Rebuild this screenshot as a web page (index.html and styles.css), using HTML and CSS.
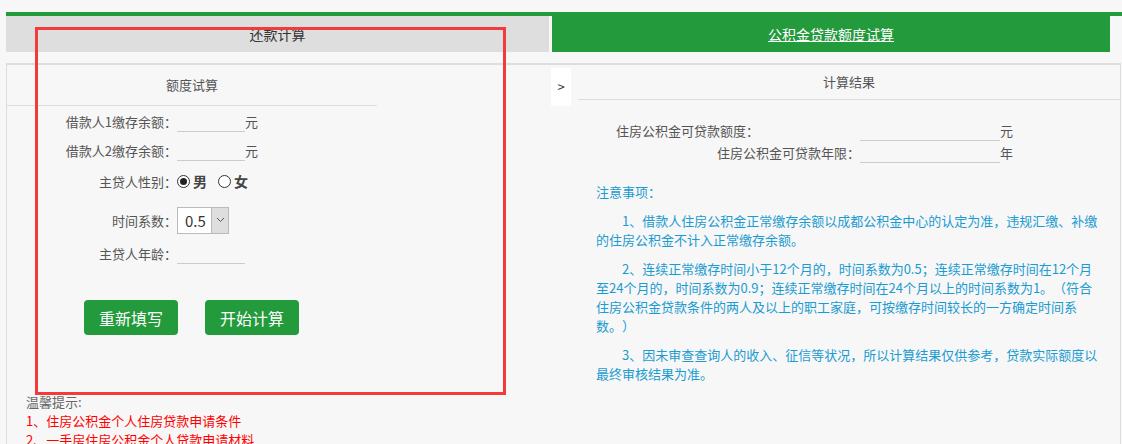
FILE: index.html
```html
<!DOCTYPE html>
<html>
<head>
    <meta charset="utf-8">
    <meta name="viewport" content="width=device-width, initial-scale=1.0">
    <link rel="stylesheet" href="styles.css">
</head>
<body>
    <div class="page">
        <div class="tabs">
            <div class="tab">还款计算</div>
            <div class="tab tab-ativa"><a href="#">公积金贷款额度试算</a></div>
        </div>

        <div class="conteudo">
            <div class="painel-esq">
                <div class="cabecalho">额度试算</div>

                <div class="linha linha-1">
                    <span class="rotulo">借款人1缴存余额：</span>
                    <input class="campo" type="text">
                    <span class="unidade">元</span>
                </div>
                <div class="linha linha-2">
                    <span class="rotulo">借款人2缴存余额：</span>
                    <input class="campo" type="text">
                    <span class="unidade">元</span>
                </div>
                <div class="linha linha-3">
                    <span class="rotulo">主贷人性别：</span>
                    <label class="opcao"><span class="radio marcado"></span><b>男</b></label>
                    <label class="opcao"><span class="radio"></span><b>女</b></label>
                </div>
                <div class="linha linha-4">
                    <span class="rotulo">时间系数：</span>
                    <span class="seletor">
                        <span class="seletor-valor">0.5</span>
                        <span class="seletor-seta">
                            <svg width="9" height="6" viewBox="0 0 9 6"><path d="M1 1 L4.5 4.5 L8 1" fill="none" stroke="#555" stroke-width="1"/></svg>
                        </span>
                    </span>
                </div>
                <div class="linha linha-5">
                    <span class="rotulo">主贷人年龄：</span>
                    <input class="campo" type="text">
                </div>

                <div class="botoes">
                    <button class="botao">重新填写</button>
                    <button class="botao">开始计算</button>
                </div>

                <div class="dicas">
                    <div class="dicas-titulo">温馨提示:</div>
                    <a href="#">1、住房公积金个人住房贷款申请条件</a>
                    <a href="#">2、一手房住房公积金个人贷款申请材料</a>
                </div>
            </div>

            <div class="alternar">&gt;</div>

            <div class="painel-dir">
                <div class="cabecalho cabecalho-dir">计算结果</div>

                <div class="resultado resultado-1">
                    <span class="rotulo-dir rotulo-esq">住房公积金可贷款额度：</span>
                    <input class="campo campo-largo" type="text">
                    <span class="unidade">元</span>
                </div>
                <div class="resultado">
                    <span class="rotulo-dir">住房公积金可贷款年限：</span>
                    <input class="campo campo-largo" type="text">
                    <span class="unidade">年</span>
                </div>

                <div class="notas">
                    <div class="notas-titulo">注意事项：</div>
                    <p>1、借款人住房公积金正常缴存余额以成都公积金中心的认定为准，违规汇缴、补缴的住房公积金不计入正常缴存余额。</p>
                    <p>2、连续正常缴存时间小于12个月的，时间系数为0.5；连续正常缴存时间在12个月至24个月的，时间系数为0.9；连续正常缴存时间在24个月以上的时间系数为1。（符合住房公积金贷款条件的两人及以上的职工家庭，可按缴存时间较长的一方确定时间系数。）</p>
                    <p>3、因未审查查询人的收入、征信等状况，所以计算结果仅供参考，贷款实际额度以最终审核结果为准。</p>
                </div>
            </div>
        </div>

        <div class="marcacao"></div>
    </div>
</body>
</html>
```

FILE: styles.css
```css
        body {
            margin: 0;
            background-color: #f7f7f7;
            font-family: "Noto Sans CJK SC", "Liberation Sans", sans-serif;
            font-size: 13px;
            color: #555;
            text-spacing-trim: space-all;
        }

        .page {
            position: relative;
            padding: 12px 0 0 6px;
            height: 432px;
            overflow: hidden;
        }

        .tabs {
            display: flex;
            gap: 3px;
            height: 36px;
            border-top: 4px solid #239a3b;
        }

        .tab {
            width: 543px;
            background-color: #dedede;
            color: #333;
            font-size: 14px;
            line-height: 36px;
            text-align: center;
        }

        .tab-ativa {
            width: 558px;
            background-color: #239a3b;
        }

        .tab-ativa a {
            color: white;
        }

        .conteudo {
            display: flex;
            width: 1113px;
            margin-top: 11px;
            border-top: 2px solid #dedede;
            border-left: 1px solid #dedede;
            border-right: 1px solid #dedede;
            height: 400px;
        }

        .painel-esq {
            width: 370px;
        }

        .cabecalho {
            height: 40px;
            line-height: 40px;
            text-align: center;
            border-bottom: 1px solid #dedede;
        }

        .cabecalho-dir {
            height: 34px;
            line-height: 34px;
        }

        .linha {
            display: flex;
            align-items: center;
        }

        .linha-1 { height: 30px; }
        .linha-2 { height: 28px; }
        .linha-3 { height: 34px; }
        .linha-4 { height: 44px; }
        .linha-5 { height: 22px; }

        .rotulo {
            width: 170px;
            text-align: right;
        }

        .campo {
            box-sizing: border-box;
            width: 68px;
            height: 20px;
            padding: 0 4px;
            border: none;
            border-bottom: 1px solid #ccc;
            background: transparent;
            font-family: inherit;
            outline: none;
        }

        .linha .campo {
            margin-top: 1px;
        }

        .unidade {
            color: #555;
        }

        .opcao {
            display: flex;
            align-items: center;
            gap: 3px;
            margin-right: 11px;
            color: #444;
        }

        .opcao b {
            font-size: 14px;
        }

        .radio {
            box-sizing: border-box;
            width: 13px;
            height: 13px;
            border: 1px solid #333;
            border-radius: 50%;
            background: white;
            position: relative;
        }

        .radio.marcado::after {
            content: "";
            position: absolute;
            left: 2px;
            top: 2px;
            width: 7px;
            height: 7px;
            border-radius: 50%;
            background: #222;
        }

        .seletor {
            display: flex;
            height: 27px;
            width: 52px;
            box-sizing: border-box;
            border: 1px solid #bbb;
            background: white;
        }

        .seletor-valor {
            flex: 1;
            padding-left: 7px;
            font-size: 15px;
            line-height: 25px;
            color: #333;
        }

        .seletor-seta {
            width: 16px;
            background: #dedede;
            border-left: 1px solid #bbb;
            display: flex;
            align-items: center;
            justify-content: center;
        }

        .botoes {
            display: flex;
            gap: 27px;
            margin: 36px 0 0 77px;
        }

        .botao {
            width: 94px;
            height: 35px;
            padding: 0;
            border: none;
            border-radius: 4px;
            background-color: #239a3b;
            color: white;
            font-family: inherit;
            font-size: 16px;
            cursor: pointer;
        }

        .dicas {
            margin: 57px 0 0 19px;
            line-height: 19px;
        }

        .dicas-titulo {
            color: #666;
        }

        .dicas a {
            display: block;
            color: red;
            text-decoration: none;
        }

        .alternar {
            width: 20px;
            height: 38px;
            margin: 3px 0 0 174px;
            background: white;
            color: #333;
            font-size: 13px;
            line-height: 38px;
            text-align: center;
        }

        .painel-dir {
            width: 542px;
            margin-left: 7px;
        }

        .resultado {
            display: flex;
            align-items: center;
            height: 22px;
        }

        .resultado-1 {
            margin-top: 19px;
        }

        .rotulo-dir {
            width: 282px;
            text-align: right;
            color: #555;
        }

        .rotulo-esq {
            box-sizing: border-box;
            padding-left: 38px;
            text-align: left;
        }

        .campo-largo {
            width: 140px;
            height: 22px;
        }

        .notas {
            padding: 0 18px;
            margin-top: 19px;
            color: #1a9bd1;
            line-height: 19px;
        }

        .notas p {
            margin: 10px 0 0;
            text-indent: 2em;
        }

        .marcacao {
            position: absolute;
            left: 35px;
            top: 27px;
            width: 465px;
            height: 362px;
            border: 3px solid #f33b3b;
            pointer-events: none;
        }
```
